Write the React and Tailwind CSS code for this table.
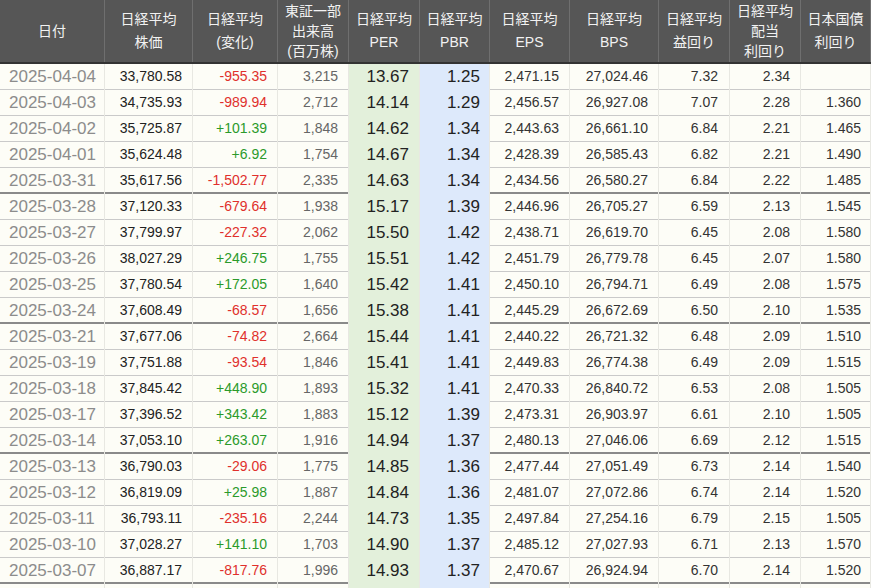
const rows = [
    ['2025-04-04', '33,780.58', '-955.35', '3,215', '13.67', '1.25', '2,471.15', '27,024.46', '7.32', '2.34', '', false],
    ['2025-04-03', '34,735.93', '-989.94', '2,712', '14.14', '1.29', '2,456.57', '26,927.08', '7.07', '2.28', '1.360', false],
    ['2025-04-02', '35,725.87', '+101.39', '1,848', '14.62', '1.34', '2,443.63', '26,661.10', '6.84', '2.21', '1.465', false],
    ['2025-04-01', '35,624.48', '+6.92', '1,754', '14.67', '1.34', '2,428.39', '26,585.43', '6.82', '2.21', '1.490', false],
    ['2025-03-31', '35,617.56', '-1,502.77', '2,335', '14.63', '1.34', '2,434.56', '26,580.27', '6.84', '2.22', '1.485', true],
    ['2025-03-28', '37,120.33', '-679.64', '1,938', '15.17', '1.39', '2,446.96', '26,705.27', '6.59', '2.13', '1.545', false],
    ['2025-03-27', '37,799.97', '-227.32', '2,062', '15.50', '1.42', '2,438.71', '26,619.70', '6.45', '2.08', '1.580', false],
    ['2025-03-26', '38,027.29', '+246.75', '1,755', '15.51', '1.42', '2,451.79', '26,779.78', '6.45', '2.07', '1.580', false],
    ['2025-03-25', '37,780.54', '+172.05', '1,640', '15.42', '1.41', '2,450.10', '26,794.71', '6.49', '2.08', '1.575', false],
    ['2025-03-24', '37,608.49', '-68.57', '1,656', '15.38', '1.41', '2,445.29', '26,672.69', '6.50', '2.10', '1.535', true],
    ['2025-03-21', '37,677.06', '-74.82', '2,664', '15.44', '1.41', '2,440.22', '26,721.32', '6.48', '2.09', '1.510', false],
    ['2025-03-19', '37,751.88', '-93.54', '1,846', '15.41', '1.41', '2,449.83', '26,774.38', '6.49', '2.09', '1.515', false],
    ['2025-03-18', '37,845.42', '+448.90', '1,893', '15.32', '1.41', '2,470.33', '26,840.72', '6.53', '2.08', '1.505', false],
    ['2025-03-17', '37,396.52', '+343.42', '1,883', '15.12', '1.39', '2,473.31', '26,903.97', '6.61', '2.10', '1.505', false],
    ['2025-03-14', '37,053.10', '+263.07', '1,916', '14.94', '1.37', '2,480.13', '27,046.06', '6.69', '2.12', '1.515', true],
    ['2025-03-13', '36,790.03', '-29.06', '1,775', '14.85', '1.36', '2,477.44', '27,051.49', '6.73', '2.14', '1.540', false],
    ['2025-03-12', '36,819.09', '+25.98', '1,887', '14.84', '1.36', '2,481.07', '27,072.86', '6.74', '2.14', '1.520', false],
    ['2025-03-11', '36,793.11', '-235.16', '2,244', '14.73', '1.35', '2,497.84', '27,254.16', '6.79', '2.15', '1.505', false],
    ['2025-03-10', '37,028.27', '+141.10', '1,703', '14.90', '1.37', '2,485.12', '27,027.93', '6.71', '2.13', '1.570', false],
    ['2025-03-07', '36,887.17', '-817.76', '1,996', '14.93', '1.37', '2,470.67', '26,924.94', '6.70', '2.14', '1.520', true]
];

const headers = [
    ['日付'],
    ['日経平均', '株価'],
    ['日経平均', '(変化)'],
    ['東証一部', '出来高', '(百万株)'],
    ['日経平均', 'PER'],
    ['日経平均', 'PBR'],
    ['日経平均', 'EPS'],
    ['日経平均', 'BPS'],
    ['日経平均', '益回り'],
    ['日経平均', '配当', '利回り'],
    ['日本国債', '利回り']
];

const grid = 'grid grid-cols-[105px_88px_85px_71px_71px_70px_80px_89px_71px_71px_70px]';

// per column cell styles (padding, colour, size, background)
const cellCls = [
    'justify-start pl-[9px] text-[17px] text-[#8c8c8c]',
    'justify-end pr-[10px] text-[14px] text-[#222]',
    'justify-end pr-[10px] text-[14px]',
    'justify-end pr-[10px] text-[14px] text-[#666]',
    'justify-end pr-[10px] text-[17px] text-[#222] bg-[#e3f0db]',
    'justify-end pr-[9px] text-[17px] text-[#222] bg-[#dde9fb]',
    'justify-end pr-[10px] text-[14px] text-[#333]',
    'justify-end pr-[10px] text-[14px] text-[#333]',
    'justify-end pr-[11px] text-[14px] text-[#333]',
    'justify-end pr-[10px] text-[14px] text-[#333]',
    'justify-end pr-[9px] text-[14px] text-[#333]'
];

const changeColor = (v) => (v.startsWith('-') ? 'text-[#e0302c]' : 'text-[#2b9a2b]');

const Row = ({ row }) => {
    const sep = row[11];
    return (
        <div
            className={`${grid} h-[26px] ${
                sep ? 'border-b-2 border-[#8a8a8a]' : 'border-b border-[#cacaca]'
            }`}
        >
            {row.slice(0, 11).map((v, i) => (
                <div
                    key={i}
                    className={`flex items-center border-r border-[#e8e8e2] ${cellCls[i]} ${
                        i === 2 ? changeColor(v) : ''
                    }`}
                >
                    {v}
                </div>
            ))}
        </div>
    );
};

export default function App() {
    return (
        <div className="w-[871px] h-[588px] overflow-hidden bg-[#fdfdf7] font-['Liberation_Sans','Noto_Sans_CJK_JP',sans-serif]">
            <div className={`${grid} h-[64px] bg-[#565656] border-b-2 border-[#333]`}>
                {headers.map((h, i) => (
                    <div
                        key={i}
                        className={`flex flex-col items-center justify-center border-r border-[#6f6f6f] text-[14px] text-[#f2f2f2] ${
                            h.length === 3 ? 'leading-[20px]' : 'leading-[23px]'
                        }`}
                    >
                        {h.map((t) => (
                            <span key={t}>{t}</span>
                        ))}
                    </div>
                ))}
            </div>
            {rows.map((r) => (
                <Row key={r[0]} row={r} />
            ))}
            <div className={`${grid} h-[26px]`}>
                {cellCls.map((c, i) => (
                    <div key={i} className={`border-r border-[#e8e8e2] ${c}`}></div>
                ))}
            </div>
        </div>
    );
}
